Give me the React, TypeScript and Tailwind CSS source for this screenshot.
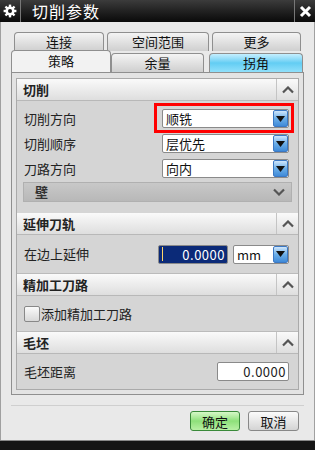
import React from "react";

const font = { fontFamily: '"Noto Sans CJK SC", "Noto Sans", sans-serif' };

function Gear() {
  return (
    <svg width="14" height="14" viewBox="0 0 14 14">
      <g fill="#fff">
        <circle cx="7" cy="7" r="4.6" />
        {[0, 45, 90, 135, 180, 225, 270, 315].map((a) => (
          <rect key={a} x="5.8" y="0.6" width="2.4" height="3" transform={`rotate(${a} 7 7)`} />
        ))}
      </g>
      <circle cx="7" cy="7" r="2" fill="#1a1a1a" />
    </svg>
  );
}

function Chevron({ down }: { down?: boolean }) {
  return (
    <svg width="12" height="8" viewBox="0 0 12 8">
      <path
        d={down ? "M1 1.5 L6 6.5 L11 1.5" : "M1 6.5 L6 1.5 L11 6.5"}
        fill="none"
        stroke="#555"
        strokeWidth="2.2"
      />
    </svg>
  );
}

function ArrowBtn() {
  return (
    <div className="flex h-full w-[15px] items-center justify-center rounded-[2px] border border-[#3b78c4] bg-gradient-to-b from-[#cfe6fb] via-[#6aaee8] to-[#3f8ad8]">
      <svg width="9" height="6" viewBox="0 0 9 6">
        <path d="M0 0 H9 L4.5 6 Z" fill="#111" />
      </svg>
    </div>
  );
}

function Select({ value, className }: { value: string; className?: string }) {
  return (
    <div className={`flex h-[19px] items-center rounded-[2px] border border-[#8a8a8a] bg-white pl-[3px] ${className ?? ""}`}>
      <span className="flex-1 text-[13px] leading-none text-[#111]">{value}</span>
      <ArrowBtn />
    </div>
  );
}

function Header({ title }: { title: string }) {
  return (
    <div className="flex h-[22px] items-stretch border-b border-[#b8b8b8] bg-gradient-to-b from-[#fafafa] to-[#dedede]">
      <div className="flex flex-1 items-center pl-[6px] text-[13px] font-bold text-[#222]">{title}</div>
      <div className="flex w-[22px] items-center justify-center border-l border-[#c4c4c4]">
        <Chevron />
      </div>
    </div>
  );
}

function Row({ label, children }: { label: string; children: React.ReactNode }) {
  return (
    <div className="flex h-[25px] items-center justify-between pr-[9px] pl-[7px]">
      <span className="text-[13px] text-[#222]">{label}</span>
      {children}
    </div>
  );
}

function Tab({ label, className }: { label: string; className?: string }) {
  return (
    <div
      className={`flex items-center justify-center rounded-t-[4px] border border-b-0 border-[#8f8f8f] text-[13px] text-[#111] ${className ?? ""}`}
    >
      {label}
    </div>
  );
}

export default function App() {
  return (
    <div style={font} className="flex h-[450px] w-[315px] flex-col overflow-hidden bg-[#e9e9e9]">
      {/* title bar */}
      <div className="flex h-[22px] items-stretch bg-gradient-to-b from-[#3c3c3c] to-[#0a0a0a]">
        <div className="flex w-[21px] items-center justify-center border-r border-[#777]">
          <Gear />
        </div>
        <div className="flex flex-1 items-center pl-[11px] text-[16px] tracking-[1px] text-white">切削参数</div>
        <div className="flex w-[21px] items-center justify-center border-l border-[#777]">
          <svg width="13" height="13" viewBox="0 0 13 13">
            <path d="M2 2 L11 11 M11 2 L2 11" stroke="#fff" strokeWidth="3" />
          </svg>
        </div>
      </div>

      <div className="flex flex-1 flex-col border-x border-[#a0a0a0] px-[10px]">
        {/* tabs */}
        <div className="mt-[10px] flex h-[19px] gap-[3px] pr-[3px] pl-[3px]">
          <Tab label="连接" className="w-[91px] bg-gradient-to-b from-[#f4f4f4] to-[#cfcfcf]" />
          <Tab label="空间范围" className="w-[103px] bg-gradient-to-b from-[#f4f4f4] to-[#cfcfcf]" />
          <Tab label="更多" className="w-[90px] bg-gradient-to-b from-[#f4f4f4] to-[#cfcfcf]" />
        </div>
        <div className="flex h-[21px] items-end">
          <Tab label="策略" className="relative z-10 h-[22px] w-[100px] bg-[#f2f2f2] pb-[2px]" />
          <Tab label="余量" className="h-[19px] w-[93px] bg-gradient-to-b from-[#f4f4f4] to-[#cfcfcf]" />
          <div className="w-[5px]" />
          <Tab
            label="拐角"
            className="h-[19px] w-[94px] border-[#2f7fd0] bg-gradient-to-b from-[#c4efff] via-[#62cdf3] to-[#8fe0fb]"
          />
        </div>

        {/* panel */}
        <div className="flex flex-col border border-[#8f8f8f] bg-[#e3e3e3] pt-[5px] pr-[4px] pb-[4px] pl-[4px]">
          <div className="flex flex-col border border-[#aaa] bg-[#d5d5d5]">
            <Header title="切削" />
            <div className="flex flex-col pt-[5px]">
              <div className="relative">
                <Row label="切削方向">
                  <Select value="顺铣" className="w-[127px]" />
                </Row>
                <div className="pointer-events-none absolute top-[-3px] right-[4px] h-[30px] w-[140px] border-[3px] border-[#f00]" />
              </div>
              <Row label="切削顺序">
                <Select value="层优先" className="w-[127px]" />
              </Row>
              <Row label="刀路方向">
                <Select value="向内" className="w-[127px]" />
              </Row>
              <div className="mx-[6px] mt-[1px] mb-[11px] flex h-[20px] items-center justify-between border border-[#b0b0b0] bg-gradient-to-b from-[#c8c8c8] to-[#b8b8b8] pr-[6px] pl-[11px]">
                <span className="text-[13px] font-bold text-[#333]">壁</span>
                <Chevron down />
              </div>
            </div>

            <Header title="延伸刀轨" />
            <div className="flex h-[39px] items-center justify-between border-b border-[#bbb] pr-[9px] pl-[7px]">
              <span className="text-[13px] text-[#222]">在边上延伸</span>
              <div className="flex items-center gap-[5px]">
                <div className="flex h-[19px] w-[70px] items-center justify-end rounded-[2px] border border-[#8a8a8a] bg-[#0b2a78] pr-[2px] text-[13px] leading-none tracking-[0.5px] text-white">
                  <span className="mr-auto ml-[3px] h-[14px] w-[1px] bg-[#ffd76a]" />
                  0.0000
                </div>
                <Select value="mm" className="w-[56px]" />
              </div>
            </div>

            <Header title="精加工刀路" />
            <div className="flex h-[36px] items-center border-b border-[#bbb] pl-[7px]">
              <div className="mr-[1px] h-[16px] w-[16px] rounded-[2px] border border-[#888] bg-gradient-to-b from-[#fafafa] to-[#d8d8d8]" />
              <span className="text-[13px] text-[#222]">添加精加工刀路</span>
            </div>

            <Header title="毛坯" />
            <div className="flex h-[35px] items-center justify-between pr-[9px] pl-[7px]">
              <span className="text-[13px] text-[#222]">毛坯距离</span>
              <div className="flex h-[19px] w-[72px] items-center justify-end rounded-[2px] border border-[#8a8a8a] bg-white pr-[2px] text-[13px] leading-none tracking-[0.5px] text-[#222]">
                0.0000
              </div>
            </div>
          </div>
        </div>

        {/* footer */}
        <div className="mt-[10px] border-t border-[#cfcfcf]" />
        <div className="mt-[5px] flex justify-end gap-[8px] pr-[5px]">
          <button className="h-[20px] w-[50px] rounded-[3px] border border-[#3a8a3a] bg-gradient-to-b from-[#d6f8c8] via-[#8ee07a] to-[#b8f0a4] text-[13px] leading-none text-[#111]">
            确定
          </button>
          <button className="h-[20px] w-[51px] rounded-[3px] border border-[#888] bg-gradient-to-b from-[#fbfbfb] to-[#d4d4d4] text-[13px] leading-none text-[#111]">
            取消
          </button>
        </div>
      </div>
      <div className="h-[10px] border-t border-[#888] bg-[#151515]" />
    </div>
  );
}
